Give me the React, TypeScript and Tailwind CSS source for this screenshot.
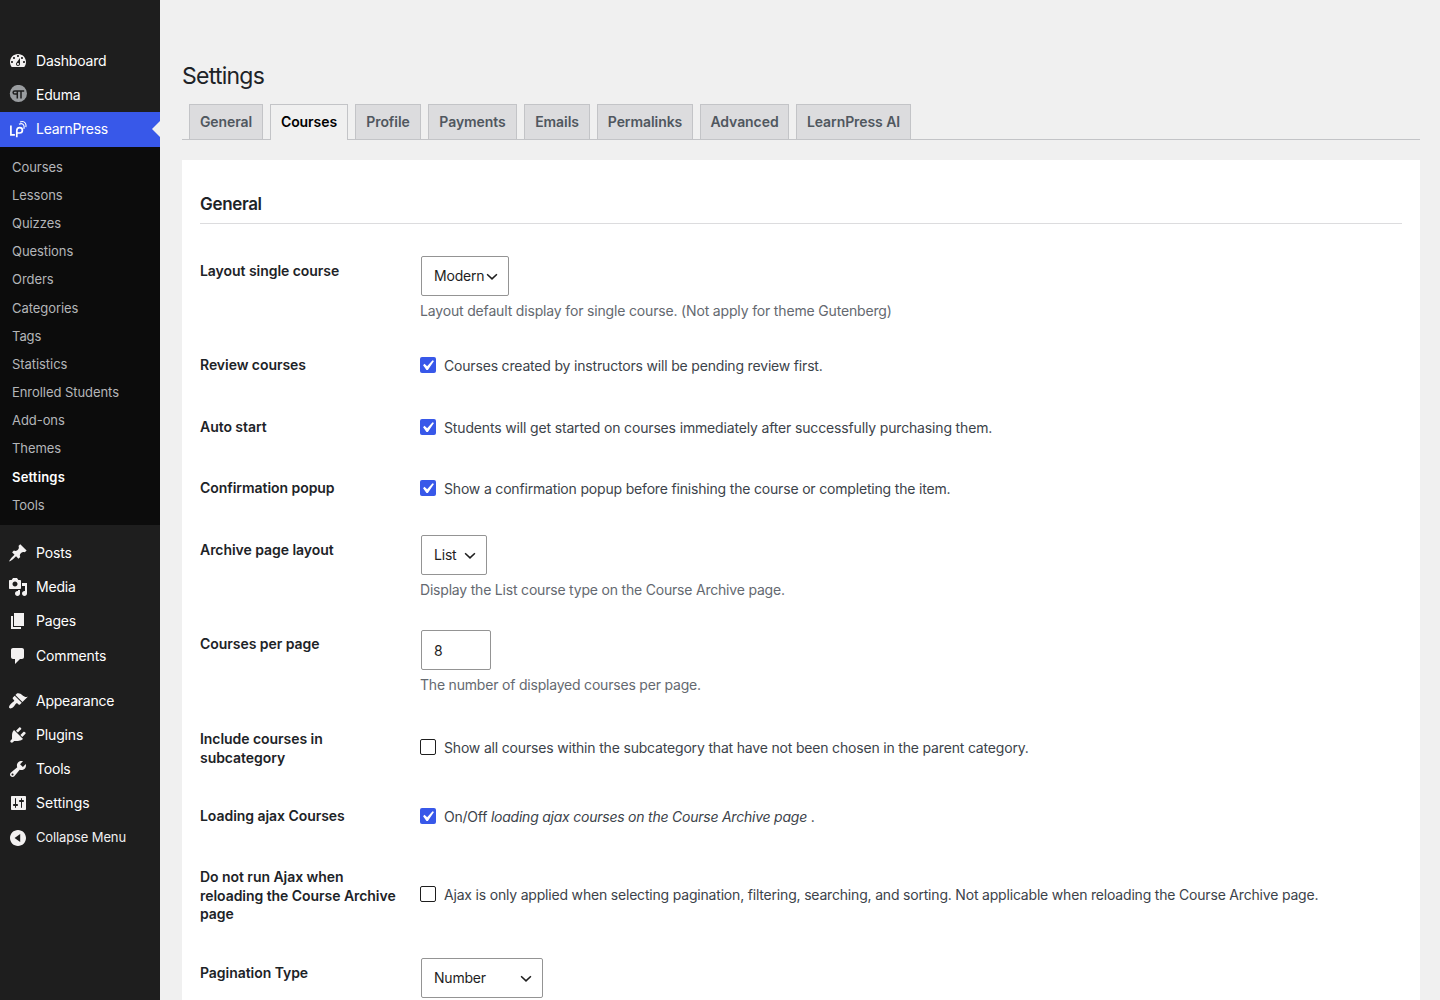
import type { ReactNode } from 'react';

interface MenuEntry {
  label: string;
  icon: ReactNode;
  className: string;
}

// ── Icons ───────────────────────────────────

function Dashicon({ d }: { d: string }) {
  return (
    <svg className="h-5 w-5 shrink-0" viewBox="0 0 20 20" fill="#f3f1f1">
      <path fillRule="evenodd" d={d} />
    </svg>
  );
}

const DASHBOARD =
  'M3.76 16h12.48c1.1-1.37 1.76-3.11 1.76-5 0-4.42-3.58-8-8-8s-8 3.58-8 8c0 1.89.66 3.63 1.76 5zM10 4c.55 0 1 .45 1 1s-.45 1-1 1-1-.45-1-1 .45-1 1-1zM6 6c.55 0 1 .45 1 1s-.45 1-1 1-1-.45-1-1 .45-1 1-1zm8 0c.55 0 1 .45 1 1s-.45 1-1 1-1-.45-1-1 .45-1 1-1zm-5.37 5.55L12 7v6c0 1.1-.9 2-2 2s-2-.9-2-2c0-.57.24-1.08.63-1.45zM4 10c.55 0 1 .45 1 1s-.45 1-1 1-1-.45-1-1 .45-1 1-1zm12 0c.55 0 1 .45 1 1s-.45 1-1 1-1-.45-1-1 .45-1 1-1zm-5 3c0-.55-.45-1-1-1s-1 .45-1 1 .45 1 1 1 1-.45 1-1z';
const POSTS =
  'M10.44 3.02l1.82-1.82 6.36 6.35-1.83 1.82c-1.05-.68-2.48-.57-3.41.36l-.75.75c-.92.93-1.04 2.35-.35 3.41l-1.83 1.82-2.41-2.41-2.8 2.79c-.42.42-3.38 2.71-3.8 2.29s1.86-3.39 2.28-3.81l2.79-2.79L4.1 9.36l1.83-1.82c1.05.69 2.48.57 3.4-.36l.75-.75c.93-.92 1.05-2.35.36-3.41z';
const MEDIA =
  'M13 11V4c0-.55-.45-1-1-1h-1.67L9 1H5L3.67 3H2c-.55 0-1 .45-1 1v7c0 .55.45 1 1 1h10c.55 0 1-.45 1-1zM7 4.5c1.38 0 2.5 1.12 2.5 2.5S8.38 9.5 7 9.5 4.5 8.38 4.5 7 5.62 4.5 7 4.5zM14 6h5v10.5c0 1.38-1.12 2.5-2.5 2.5S14 17.88 14 16.5s1.12-2.5 2.5-2.5c.17 0 .34.02.5.05V9h-3V6zm-4 8.05V13h2v3.5c0 1.38-1.12 2.5-2.5 2.5S7 17.88 7 16.5 8.12 14 9.5 14c.17 0 .34.02.5.05z';
const PAGES = 'M6 15V2h10v13H6zm-1 1h8v2H3V5h2v11z';
const COMMENTS =
  'M5 2h9c1.1 0 2 .9 2 2v7c0 1.1-.9 2-2 2h-2l-5 5v-5H5c-1.1 0-2-.9-2-2V4c0-1.1.9-2 2-2z';
const APPEARANCE =
  'M14.48 11.06L7.41 3.99l1.5-1.5c.5-.56 2.3-.47 3.51.32 1.21.8 1.43 1.28 2.91 2.1 1.18.64 2.45 1.26 4.45.85zm-.71.71L6.7 4.7 4.93 6.47c-.39.39-.39 1.02 0 1.41l1.06 1.06c.39.39.39 1.03 0 1.42-.6.6-1.43 1.11-2.21 1.69-.35.26-.7.53-1.01.84C1.43 14.23.4 16.08 1.4 17.07c.99 1 2.84-.03 4.18-1.36.31-.31.58-.66.85-1.02.57-.78 1.08-1.61 1.69-2.21.39-.39 1.02-.39 1.41 0l1.06 1.06c.39.39 1.02.39 1.41 0z';
const PLUGINS =
  'M13.11 4.36L9.87 7.6 8 5.73l3.24-3.24c.35-.34 1.05-.2 1.56.32.52.51.66 1.21.31 1.55zm-8 1.77l.91-1.12 9.01 9.01-1.19.84c-.71.71-2.63 1.16-3.82 1.16H6.14L4.9 17.26c-.59.59-1.54.59-2.12 0-.59-.58-.59-1.53 0-2.12l1.24-1.24v-3.88c0-1.13.4-3.19 1.09-3.89zm7.26 3.97l3.24-3.24c.34-.35 1.04-.21 1.55.31.52.51.66 1.21.31 1.55l-3.24 3.25z';
const TOOLS =
  'M16.68 9.77c-1.34 1.34-3.3 1.67-4.95.99l-5.41 6.52c-.99.99-2.59.99-3.58 0s-.99-2.59 0-3.57l6.52-5.42c-.68-1.65-.35-3.61.99-4.95 1.28-1.28 3.12-1.62 4.72-1.06l-2.89 2.89 2.82 2.82 2.86-2.87c.53 1.58.18 3.39-1.08 4.65zM3.81 16.21c.4.39 1.04.39 1.43 0 .4-.4.4-1.04 0-1.43-.39-.4-1.03-.4-1.43 0-.39.39-.39 1.03 0 1.43z';
const SETTINGS =
  'M18 16V4c0-.55-.45-1-1-1H4c-.55 0-1 .45-1 1v12c0 .55.45 1 1 1h13c.55 0 1-.45 1-1zM8 11h1c.55 0 1 .45 1 1s-.45 1-1 1H8v1.5c0 .28-.22.5-.5.5s-.5-.22-.5-.5V13H6c-.55 0-1-.45-1-1s.45-1 1-1h1V5.5c0-.28.22-.5.5-.5s.5.22.5.5V11zm5-2h-1c-.55 0-1-.45-1-1s.45-1 1-1h1V5.5c0-.28.22-.5.5-.5s.5.22.5.5V7h1c.55 0 1 .45 1 1s-.45 1-1 1h-1v5.5c0 .28-.22.5-.5.5s-.5-.22-.5-.5V9z';
const COLLAPSE =
  'M10 2c4.42 0 8 3.58 8 8s-3.58 8-8 8-8-3.58-8-8 3.58-8 8-8zm2.2 12V6L6.6 10z';

function EdumaIcon() {
  return (
    <svg className="h-5 w-5 shrink-0" viewBox="0 0 20 20" fill="none">
      <circle cx="10.4" cy="8.5" r="8.6" fill="#9a9da0" />
      <path
        d="M16.2 5.9H6.8c-1.100 0-1.700.600-1.700 1.500s.600 1.600 1.700 1.600H9M9.300 5.900v7.600M13 5.900v7.600"
        stroke="#1e1e1e"
        strokeWidth="1.5"
      />
    </svg>
  );
}

function LearnPressIcon() {
  return (
    <svg className="h-5 w-5 shrink-0" viewBox="0 0 20 20" fill="none" stroke="#fff">
      <path d="M2.9 6.6v9.200h4" strokeWidth="1.7" />
      <path
        d="M8.800 18.200v-6.400c0-2.100 1.100-3.100 2.900-3.100s2.700 1 2.700 2.600-1.100 2.700-2.900 2.700h-2.500"
        strokeWidth="1.7"
      />
      <path d="M11 5.300c1.800-.900 3.600-.700 4.600.700.700 1.100.700 2.500.300 3.900" strokeWidth="1.200" />
      <path d="M12 2.900c2.200-.800 4.300-.300 5.400 1.300.700 1.200.800 2.500.500 3.900" strokeWidth="1.100" />
    </svg>
  );
}

// ── Sidebar ─────────────────────────────────

const TOP_MENU: MenuEntry[] = [
  { label: 'Dashboard', icon: <Dashicon d={DASHBOARD} />, className: 'tracking-[-0.2px]' },
  { label: 'Eduma', icon: <EdumaIcon />, className: 'tracking-[-0.2px]' },
];

const CONTENT_MENU: MenuEntry[] = [
  { label: 'Posts', icon: <Dashicon d={POSTS} />, className: 'tracking-[-0.15px]' },
  { label: 'Media', icon: <Dashicon d={MEDIA} />, className: 'tracking-[-0.2px]' },
  { label: 'Pages', icon: <Dashicon d={PAGES} />, className: 'tracking-[-0.2px]' },
  { label: 'Comments', icon: <Dashicon d={COMMENTS} />, className: 'tracking-[-0.15px]' },
];

const ADMIN_MENU: MenuEntry[] = [
  { label: 'Appearance', icon: <Dashicon d={APPEARANCE} />, className: 'tracking-[-0.23px]' },
  { label: 'Plugins', icon: <Dashicon d={PLUGINS} />, className: 'tracking-[-0.15px]' },
  { label: 'Tools', icon: <Dashicon d={TOOLS} />, className: 'tracking-[-0.2px]' },
  { label: 'Settings', icon: <Dashicon d={SETTINGS} />, className: 'tracking-normal' },
];

const SUBMENU = [
  'Courses',
  'Lessons',
  'Quizzes',
  'Questions',
  'Orders',
  'Categories',
  'Tags',
  'Statistics',
  'Enrolled Students',
  'Add-ons',
  'Themes',
  'Settings',
  'Tools',
];

function MenuItem({ label, icon, className }: MenuEntry) {
  return (
    <li>
      <a className="flex h-[34.2px] items-center gap-2 pl-2 text-white">
        {icon}
        <span className={className}>{label}</span>
      </a>
    </li>
  );
}

function Sidebar() {
  return (
    <nav className="w-40 shrink-0 bg-[#1e1e1e] pt-11 text-sm leading-[18.2px]">
      <ul>
        {TOP_MENU.map((item) => (
          <MenuItem key={item.label} {...item} />
        ))}
        <li>
          <a className="relative flex h-[34.2px] items-center gap-2 bg-[#3858e9] pl-2 text-white">
            <LearnPressIcon />
            <span className="tracking-[-0.28px]">LearnPress</span>
            <span className="absolute top-[9px] right-0 border-y-8 border-r-8 border-y-transparent border-r-[#f0f0f0]" />
          </a>
          <ul className="bg-[#0c0c0c] pt-[6.25px] pb-[6.15px] text-[13px]">
            {SUBMENU.map((label) => (
              <li
                key={label}
                className={
                  label === 'Settings'
                    ? 'flex h-[28.17px] items-center pl-3 font-semibold tracking-[0.18px] text-white'
                    : 'flex h-[28.17px] items-center pl-3 tracking-[-0.06px] text-[#b4b6b9]'
                }
              >
                {label}
              </li>
            ))}
          </ul>
        </li>
      </ul>
      <ul className="pt-[11px]">
        {CONTENT_MENU.map((item) => (
          <MenuItem key={item.label} {...item} />
        ))}
      </ul>
      <ul className="pt-[11px]">
        {ADMIN_MENU.map((item) => (
          <MenuItem key={item.label} {...item} />
        ))}
      </ul>
      <button className="flex h-[34.2px] items-center gap-2 pl-2 text-[13px] tracking-[-0.13px] text-[#f0f0f1]">
        <Dashicon d={COLLAPSE} />
        Collapse Menu
      </button>
    </nav>
  );
}

// ── Form controls ───────────────────────────

function Select({ value, className }: { value: string; className: string }) {
  return (
    <div
      className={`ml-px flex h-10 items-center justify-between rounded-xs border border-[#949494] bg-white pr-2 pl-3 text-sm tracking-[-0.2px] text-[#1e1e1e] ${className}`}
    >
      {value}
      <svg className="-ml-2 h-4 w-4 shrink-0" viewBox="0 0 16 16" fill="none" stroke="#1e1e1e" strokeWidth="1.5">
        <path d="M3.1 6.200l4.900 4.700 4.900-4.700" />
      </svg>
    </div>
  );
}

interface CheckboxProps {
  checked?: boolean;
  className?: string;
  children: ReactNode;
}

function Checkbox({ checked = false, className = 'tracking-[-0.18px]', children }: CheckboxProps) {
  return (
    <label className="flex items-start gap-2">
      {checked ? (
        <span className="h-4 w-4 shrink-0 overflow-hidden rounded-xs bg-[#3858e9]">
          <svg className="-mt-[2px] -ml-[3px] h-[21px] w-[21px] max-w-none" viewBox="0 0 20 20" fill="#fff">
            <path d="M14.83 4.89l1.34.94-5.81 8.38H9.02L5.78 9.67l1.34-1.25 2.57 2.4z" />
          </svg>
        </span>
      ) : (
        <span className="h-4 w-4 shrink-0 rounded-xs border border-[#1e1e1e] bg-white" />
      )}
      <span className={`leading-[18px] whitespace-nowrap ${className}`}>{children}</span>
    </label>
  );
}

interface RowProps {
  label: ReactNode;
  className: string;
  children: ReactNode;
}

function Row({ label, className, children }: RowProps) {
  return (
    <div className={`flex shrink-0 ${className}`}>
      <div className="w-[220px] shrink-0 pt-5 leading-[18.6px] font-semibold tracking-[-0.05px] text-[#1d2327]">
        {label}
      </div>
      <div className="text-[#3c434a]">{children}</div>
    </div>
  );
}

function Description({ className = 'tracking-[-0.2px]', children }: { className?: string; children: ReactNode }) {
  return <p className={`mt-1 leading-[21px] text-[#646970] ${className}`}>{children}</p>;
}

// ── Page ────────────────────────────────────

const TABS = [
  { label: 'General', className: 'w-[74px]' },
  { label: 'Courses', className: 'w-[78px]' },
  { label: 'Profile', className: 'w-[66px]' },
  { label: 'Payments', className: 'w-[89px]' },
  { label: 'Emails', className: 'w-[66px]' },
  { label: 'Permalinks', className: 'w-[96px]' },
  { label: 'Advanced', className: 'w-[89px]' },
  { label: 'LearnPress AI', className: 'w-[115px]' },
];

function Tabs() {
  return (
    <div className="flex h-9 gap-[7px] border-b border-[#c3c4c7] pl-[7px] font-semibold tracking-[-0.07px]">
      {TABS.map(({ label, className }) => (
        <a
          key={label}
          className={`flex justify-center border border-b-0 border-[#c3c4c7] pt-[7px] leading-5 whitespace-nowrap ${className} ${
            label === 'Courses' ? 'h-9 bg-[#f0f0f0] text-black' : 'h-[35px] bg-[#dcdcde] text-[#50575e]'
          }`}
        >
          {label}
        </a>
      ))}
    </div>
  );
}

export default function App() {
  return (
    <div className="flex h-[1000px] w-[1440px] overflow-hidden bg-[#f0f0f0] font-['Inter',sans-serif] text-sm">
      <Sidebar />
      <main className="flex min-w-0 flex-1 flex-col pr-5 pl-[22px]">
        <h1 className="pt-[61px] text-[23px] leading-[30px] tracking-[-0.75px] text-[#1d2327]">Settings</h1>
        <div className="mt-[13px]">
          <Tabs />
        </div>
        <section className="mt-5 flex flex-1 flex-col overflow-hidden bg-white px-[18px]">
          <h2 className="h-16 shrink-0 border-b border-[#dcdcde] pt-8 text-[17px] leading-6 font-semibold tracking-[-0.33px] text-[#1d2327]">
            General
          </h2>
          <div className="mt-[17.8px] flex flex-col">
            <Row label="Layout single course" className="h-[94.2px]">
              <div className="pt-[14px]">
                <Select value="Modern" className="w-[88px]" />
                <Description className="tracking-[-0.165px]">
                  Layout default display for single course. (Not apply for theme Gutenberg)
                </Description>
              </div>
            </Row>
            <Row label="Review courses" className="h-[61.7px]">
              <div className="pt-[21px]">
                <Checkbox checked>Courses created by instructors will be pending review first.</Checkbox>
              </div>
            </Row>
            <Row label="Auto start" className="h-[61.3px]">
              <div className="pt-[21px]">
                <Checkbox checked className="tracking-[-0.155px]">
                  Students will get started on courses immediately after successfully purchasing them.
                </Checkbox>
              </div>
            </Row>
            <Row label="Confirmation popup" className="h-[61.6px]">
              <div className="pt-[21px]">
                <Checkbox checked>Show a confirmation popup before finishing the course or completing the item.</Checkbox>
              </div>
            </Row>
            <Row label="Archive page layout" className="h-[94.9px]">
              <div className="pt-[14px]">
                <Select value="List" className="w-[66px]" />
                <Description>Display the List course type on the Course Archive page.</Description>
              </div>
            </Row>
            <Row label="Courses per page" className="h-[94.5px]">
              <div className="pt-[14.5px]">
                <div className="ml-px flex h-10 w-[70px] items-center rounded-xs border border-[#949494] pt-0.5 pl-3 text-[#1e1e1e]">
                  8
                </div>
                <Description>The number of displayed courses per page.</Description>
              </div>
            </Row>
            <Row
              label={
                <>
                  Include courses in
                  <br />
                  subcategory
                </>
              }
              className="h-[76.9px]"
            >
              <div className="pt-[29.1px]">
                <Checkbox>Show all courses within the subcategory that have not been chosen in the parent category.</Checkbox>
              </div>
            </Row>
            <Row label="Loading ajax Courses" className="h-[61.2px]">
              <div className="pt-[21px]">
                <Checkbox checked className="tracking-[-0.23px]">
                  On/Off <i>loading ajax courses on the Course Archive page</i> .
                </Checkbox>
              </div>
            </Row>
            <Row
              label={
                <>
                  Do not run Ajax when
                  <br />
                  reloading the Course Archive
                  <br />
                  page
                </>
              }
              className="h-[96.3px]"
            >
              <div className="pt-[38.3px]">
                <Checkbox className="tracking-[-0.19px]">
                  Ajax is only applied when selecting pagination, filtering, searching, and sorting. Not applicable when
                  reloading the Course Archive page.
                </Checkbox>
              </div>
            </Row>
            <Row label="Pagination Type" className="h-[94px]">
              <div className="pt-[14px]">
                <Select value="Number" className="w-[122px]" />
              </div>
            </Row>
          </div>
        </section>
      </main>
    </div>
  );
}
